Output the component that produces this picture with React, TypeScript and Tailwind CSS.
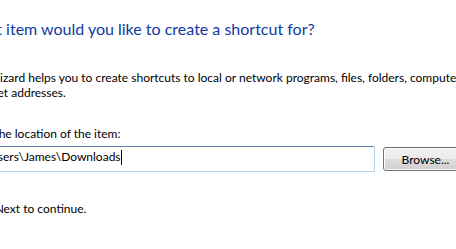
import React from 'react';

const App = () => {
  return (
    <div
      className="w-[456px] h-[249px] overflow-hidden bg-white text-black"
      style={{ fontFamily: 'Lato, "Open Sans", sans-serif' }}
    >
      {/* the dialog page is cut off on the left, so the content starts off-screen */}
      <div className="-ml-[34px] w-[520px] pt-[19px]">
        <h1 className="-ml-[3px] text-[16px] leading-[20px] text-[#0f3aa3] whitespace-nowrap">
          What item would you like to create a shortcut for?
        </h1>

        <p className="mt-[31px] text-[12px] leading-[15px] whitespace-nowrap">
          This wizard helps you to create shortcuts to local or network programs, files, folders, computers, or
          <br />
          Internet addresses.
        </p>

        <label className="block mt-[26px] text-[12px] leading-[15px] whitespace-nowrap">
          Type the location of the item:
        </label>

        <div className="mt-[5px] flex items-start gap-[8px]">
          <div className="w-[409px] h-[26px] rounded-[2px] border border-[#b6d1e8] border-t-[#5e82a8] pl-[6px] pt-[2px] text-[12px] leading-[15px] whitespace-nowrap">
            C:\Users\James\Downloads
            <span className="inline-block w-px h-[15px] mt-[1px] bg-black align-top" />
          </div>
          <button
            type="button"
            className="mt-px w-[85px] h-[24px] rounded-[3px] border border-[#707070] bg-[linear-gradient(to_bottom,#f2f2f2_0%,#ebebeb_50%,#dddddd_50%,#cfcfcf_100%)] shadow-[inset_0_0_0_1px_#fcfcfc] text-[12px] leading-[15px]"
          >
            Browse...
          </button>
        </div>

        <p className="mt-[29px] text-[12px] leading-[15px] whitespace-nowrap">Click Next to continue.</p>
      </div>
    </div>
  );
};

export default App;
